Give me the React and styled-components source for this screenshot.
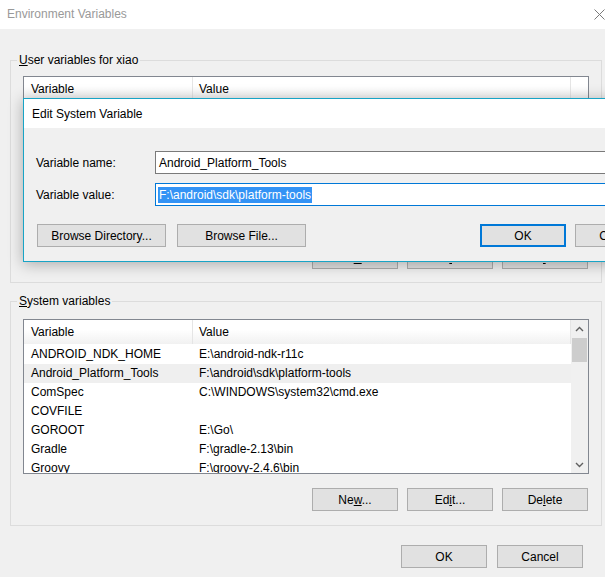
import React from 'react';
import styled, { createGlobalStyle } from 'styled-components';

const GlobalStyle = createGlobalStyle`
  html, body {
    margin: 0;
    padding: 0;
    background: #f0f0f0;
  }
  body {
    font-family: "Liberation Sans", Arial, sans-serif;
    font-size: 12px;
    color: #000;
  }
  * { box-sizing: border-box; }
`;

const systemRows = [
  { name: 'ANDROID_NDK_HOME', value: 'E:\\android-ndk-r11c' },
  { name: 'Android_Platform_Tools', value: 'F:\\android\\sdk\\platform-tools', active: true },
  { name: 'ComSpec', value: 'C:\\WINDOWS\\system32\\cmd.exe' },
  { name: 'COVFILE', value: '' },
  { name: 'GOROOT', value: 'E:\\Go\\' },
  { name: 'Gradle', value: 'F:\\gradle-2.13\\bin' },
  { name: 'Groovy', value: 'F:\\groovy-2.4.6\\bin' },
];

function Chevron({ down }) {
  return (
    <svg width="9" height="6" viewBox="0 0 9 6">
      <polyline
        points={down ? '1,1 4.5,4.5 8,1' : '1,5 4.5,1.5 8,5'}
        fill="none"
        stroke="#606060"
        strokeWidth="1.4"
      />
    </svg>
  );
}

function ListHeader({ tail }) {
  return (
    <Header $tail={tail}>
      <HeaderCell>Variable</HeaderCell>
      <HeaderCell $value>Value</HeaderCell>
      {tail && <span />}
    </Header>
  );
}

function ButtonGroup({ top }) {
  return (
    <ButtonRow $top={top}>
      <Button>Ne<u>w</u>...</Button>
      <Button>Ed<u>i</u>t...</Button>
      <Button>De<u>l</u>ete</Button>
    </ButtonRow>
  );
}

export default function App() {
  return (
    <Window>
      <GlobalStyle />
      <TitleBar>
        <Title>Environment Variables</Title>
        <svg width="11" height="11" viewBox="0 0 11 11">
          <path d="M0.5 0.5 L10.5 10.5 M10.5 0.5 L0.5 10.5" stroke="#7a7a7a" strokeWidth="1" />
        </svg>
      </TitleBar>

      <Body>
        <GroupBox $top={8} $bottom={13}>
          <Legend><u>U</u>ser variables for xiao</Legend>
          <ListBox $height={160}>
            <Table>
              <ListHeader tail />
            </Table>
          </ListBox>
          <ButtonGroup top={10} />
        </GroupBox>

        <GroupBox $top={10} $bottom={14} $gap={10}>
          <Legend><u>S</u>ystem variables</Legend>
          <ListBox $height={155}>
            <Table>
              <ListHeader />
              {systemRows.map((row) => (
                <Row key={row.name} $active={row.active}>
                  <NameCell>{row.name}</NameCell>
                  <ValueCell>{row.value}</ValueCell>
                </Row>
              ))}
            </Table>
            <ScrollBar>
              <Arrow><Chevron /></Arrow>
              <Thumb />
              <Track />
              <Arrow><Chevron down /></Arrow>
            </ScrollBar>
          </ListBox>
          <ButtonGroup top={14} />
        </GroupBox>

        <Footer>
          <Button>OK</Button>
          <Button>Cancel</Button>
        </Footer>
      </Body>

      <Dialog>
        <DialogTitle>Edit System Variable</DialogTitle>
        <DialogBody>
          <FieldGrid>
            <FieldLabel>Variable name:</FieldLabel>
            <TextBox>Android_Platform_Tools</TextBox>
            <FieldLabel>Variable value:</FieldLabel>
            <TextBox $focused>
              <Selection>F:\android\sdk\platform-tools</Selection>
            </TextBox>
          </FieldGrid>
          <DialogButtons>
            <Button $wide>Browse Directory...</Button>
            <Button $wide>Browse File...</Button>
            <Spacer />
            <Button $default>OK</Button>
            <Button>Cancel</Button>
          </DialogButtons>
        </DialogBody>
      </Dialog>
    </Window>
  );
}

const Window = styled.div`
  position: relative;
  width: 605px;
  height: 577px;
  overflow: hidden;
  background: #f0f0f0;
`

const TitleBar = styled.div`
  height: 29px;
  background: #fff;
  display: flex;
  align-items: center;
  justify-content: space-between;
  padding: 0 0 1px 7px;
`

const Title = styled.div`
  color: #999;
  font-size: 12px;
`

const Body = styled.div`
  padding: 23px 3px 0 10px;
`

const GroupBox = styled.fieldset`
  margin: ${(p) => p.$gap || 0}px 0 0 0;
  padding: ${(p) => p.$top}px 12px ${(p) => p.$bottom}px 12px;
  border: 1px solid #dcdcdc;
  min-width: 0;
`

const Legend = styled.legend`
  padding: 0 2px;
  margin-left: -6px;
  line-height: 16px;
  font-size: 12px;
`

const ListBox = styled.div`
  display: flex;
  height: ${(p) => p.$height}px;
  border: 1px solid #828790;
  background: #fff;
  overflow: hidden;
`

const Table = styled.div`
  flex: 1;
  min-width: 0;
  overflow: hidden;
`

const Header = styled.div`
  display: grid;
  grid-template-columns: ${(p) => (p.$tail ? '169px 1fr 17px' : '169px 1fr')};
  height: 24px;
  margin-bottom: 1px;
  background: linear-gradient(#ffffff 40%, #f1f1f1);
`

const HeaderCell = styled.div`
  display: flex;
  align-items: center;
  padding-left: ${(p) => (p.$value ? 6 : 7)}px;
  border-right: 1px solid #e5e5e5;
`

const Row = styled.div`
  display: grid;
  grid-template-columns: 169px 1fr;
  height: 19px;
  line-height: 19px;
  background: ${(p) => (p.$active ? '#efefef' : 'transparent')};
  white-space: nowrap;
`

const NameCell = styled.div`
  padding-left: 7px;
  overflow: hidden;
`

const ValueCell = styled.div`
  padding-left: 6px;
  overflow: hidden;
`

const ScrollBar = styled.div`
  width: 17px;
  display: flex;
  flex-direction: column;
  background: #f0f0f0;
`

const Arrow = styled.div`
  height: 17px;
  display: flex;
  align-items: center;
  justify-content: center;
`

const Thumb = styled.div`
  height: 24px;
  margin: 1px 1px 0 1px;
  background: #cdcdcd;
`

const Track = styled.div`
  flex: 1;
`

const ButtonRow = styled.div`
  display: flex;
  justify-content: flex-end;
  gap: 9px;
  margin-top: ${(p) => p.$top}px;
  padding-right: 1px;
`

const Button = styled.button`
  width: ${(p) => (p.$wide ? 129 : 86)}px;
  height: 23px;
  flex: none;
  padding: 0;
  background: #e1e1e1;
  border: ${(p) => (p.$default ? '2px solid #0078d7' : '1px solid #adadad')};
  font-family: "Liberation Sans", Arial, sans-serif;
  font-size: 12px;
  color: #000;
  white-space: nowrap;
  u {
    text-underline-offset: 1px;
  }
`

const Footer = styled.div`
  display: flex;
  justify-content: flex-end;
  gap: 10px;
  margin-top: 19px;
  padding-right: 19px;
`

const Dialog = styled.div`
  position: absolute;
  top: 98px;
  left: 23px;
  width: 651px;
  height: 164px;
  border: 1px solid #18a4c6;
  background: #f0f0f0;
  box-shadow: 0 2px 14px rgba(0, 0, 0, 0.3);
`

const DialogTitle = styled.div`
  height: 29px;
  background: #fff;
  display: flex;
  align-items: center;
  padding-left: 8px;
`

const DialogBody = styled.div`
  padding: 23px 12px 0 12px;
`

const FieldGrid = styled.div`
  display: grid;
  grid-template-columns: 119px 1fr;
  row-gap: 9px;
  align-items: center;
`

const FieldLabel = styled.div`
  white-space: nowrap;
`

const TextBox = styled.div`
  height: 23px;
  display: flex;
  align-items: center;
  background: #fff;
  border: 1px solid ${(p) => (p.$focused ? '#0078d7' : '#7a7a7a')};
  white-space: nowrap;
  padding: 0 3px 0 ${(p) => (p.$focused ? 2 : 3)}px;
`

const Selection = styled.span`
  background: #3393f5;
  color: #fff;
  padding: 1px 1px;
`

const DialogButtons = styled.div`
  display: flex;
  gap: 11px;
  margin-top: 18px;
  padding-left: 1px;
  & > :nth-last-child(1) {
    margin-left: -2px;
  }
`

const Spacer = styled.div`
  flex: 1;
`
